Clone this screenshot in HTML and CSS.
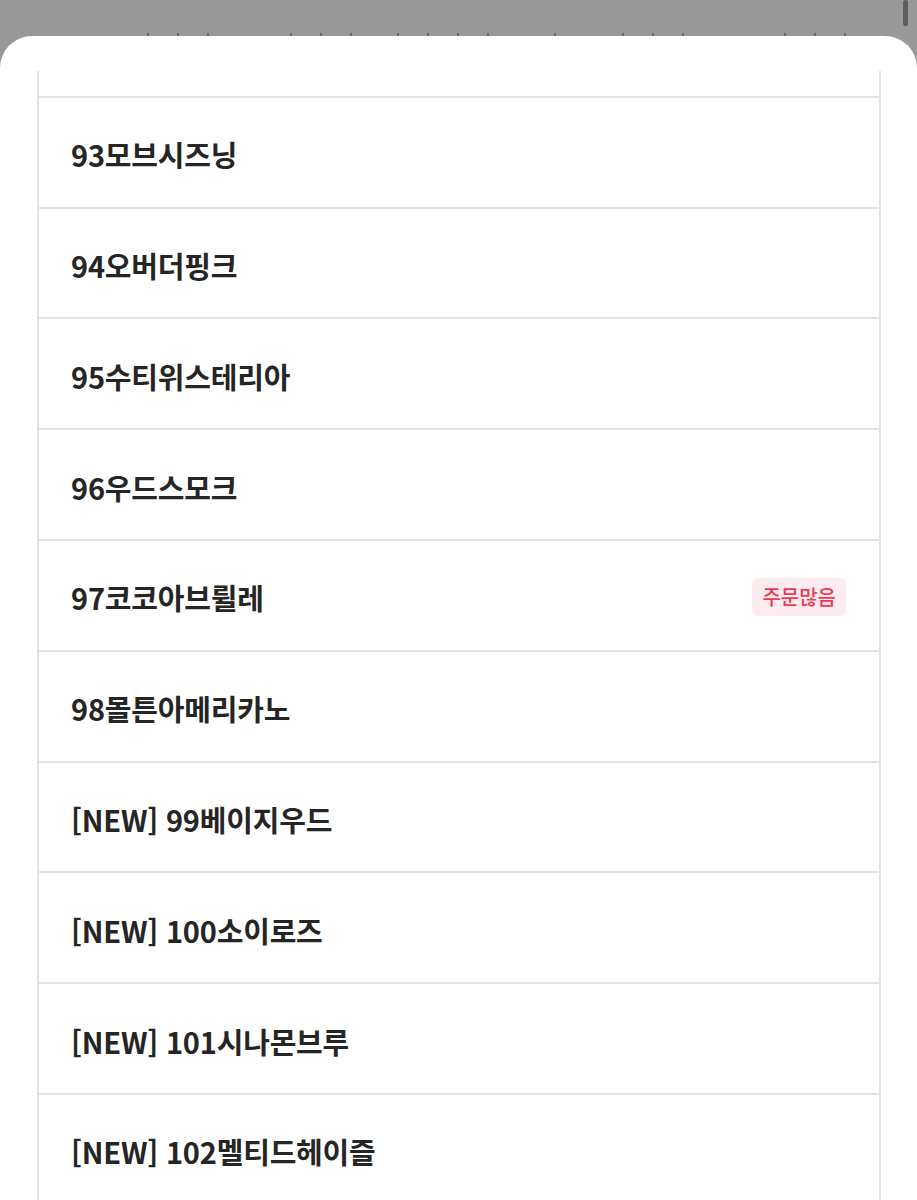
FILE: index.html
```html
<!DOCTYPE html>
<html lang="ko">
<head>
	<meta charset="UTF-8">
	<meta name="viewport" content="width=device-width,initial-scale=1">
	<title>색상 선택</title>
	<link rel="stylesheet" href="styles.css">
</head>
<body>

<div class="scrollbar"></div>

<div class="ticks">
	<div class="tg"><i></i><i></i><i></i></div>
	<div class="tg"><i></i><i></i><i></i></div>
	<div class="tg"><i></i><i></i><i></i><i></i></div>
	<div class="tg"><i></i></div>
	<div class="tg"><i></i><i></i><i></i></div>
	<div class="tg"><i></i><i></i><i></i></div>
</div>

<div class="sheet">
	<div class="scroll">
		<ul class="list">
			<li class="row"></li>
			<li class="row"><span class="name">93모브시즈닝</span></li>
			<li class="row"><span class="name">94오버더핑크</span></li>
			<li class="row"><span class="name">95수티위스테리아</span></li>
			<li class="row"><span class="name">96우드스모크</span></li>
			<li class="row"><span class="name">97코코아브륄레</span><span class="badge">주문많음</span></li>
			<li class="row"><span class="name">98몰튼아메리카노</span></li>
			<li class="row"><span class="name">[NEW] 99베이지우드</span></li>
			<li class="row"><span class="name">[NEW] 100소이로즈</span></li>
			<li class="row"><span class="name">[NEW] 101시나몬브루</span></li>
			<li class="row"><span class="name">[NEW] 102멜티드헤이즐</span></li>
		</ul>
	</div>
</div>

</body>
</html>
```

FILE: styles.css
```css
*{padding:0; margin:0; box-sizing:border-box;}
html,body{height:1200px; overflow:hidden;}
body{background:#999; font-family:"Noto Sans CJK KR","Noto Sans",sans-serif; color:#252525;}

.scrollbar{position:absolute; top:0; right:9px; width:5px; height:26px; border-radius:3px; background:#5e5e5e;}

/* bits of the page behind the sheet */
.ticks{display:flex; height:36px; align-items:flex-end; padding-left:147px;}
.tg{display:flex; gap:28px;}
.tg i{display:block; width:2px; height:3px; background:#6c6c6c;}
.tg:nth-child(2){margin-left:81px;}
.tg:nth-child(3){margin-left:45px;}
.tg:nth-child(4){margin-left:65px;}
.tg:nth-child(5){margin-left:66px;}
.tg:nth-child(6){margin-left:100px;}

.sheet{background:#fff; border-radius:32px 32px 0 0; height:1164px; padding:35px 36px 0 37px;}
.scroll{height:100%; overflow:hidden; border-left:2px solid #e2e2e2; border-right:2px solid #e2e2e2;}

.list{list-style:none; margin-top:-84px;}
.row{display:flex; align-items:center; justify-content:space-between; height:110.8px; padding:4px 33px 0 32px; border-bottom:2px solid #e2e2e2;}
.name{font-size:29px; font-weight:600; letter-spacing:-0.2px;}
.badge{font-size:20px; font-weight:500; color:#ec3a55; background:#fdecef; border-radius:6px; height:38px; line-height:38px; padding:0 10px;}
```
